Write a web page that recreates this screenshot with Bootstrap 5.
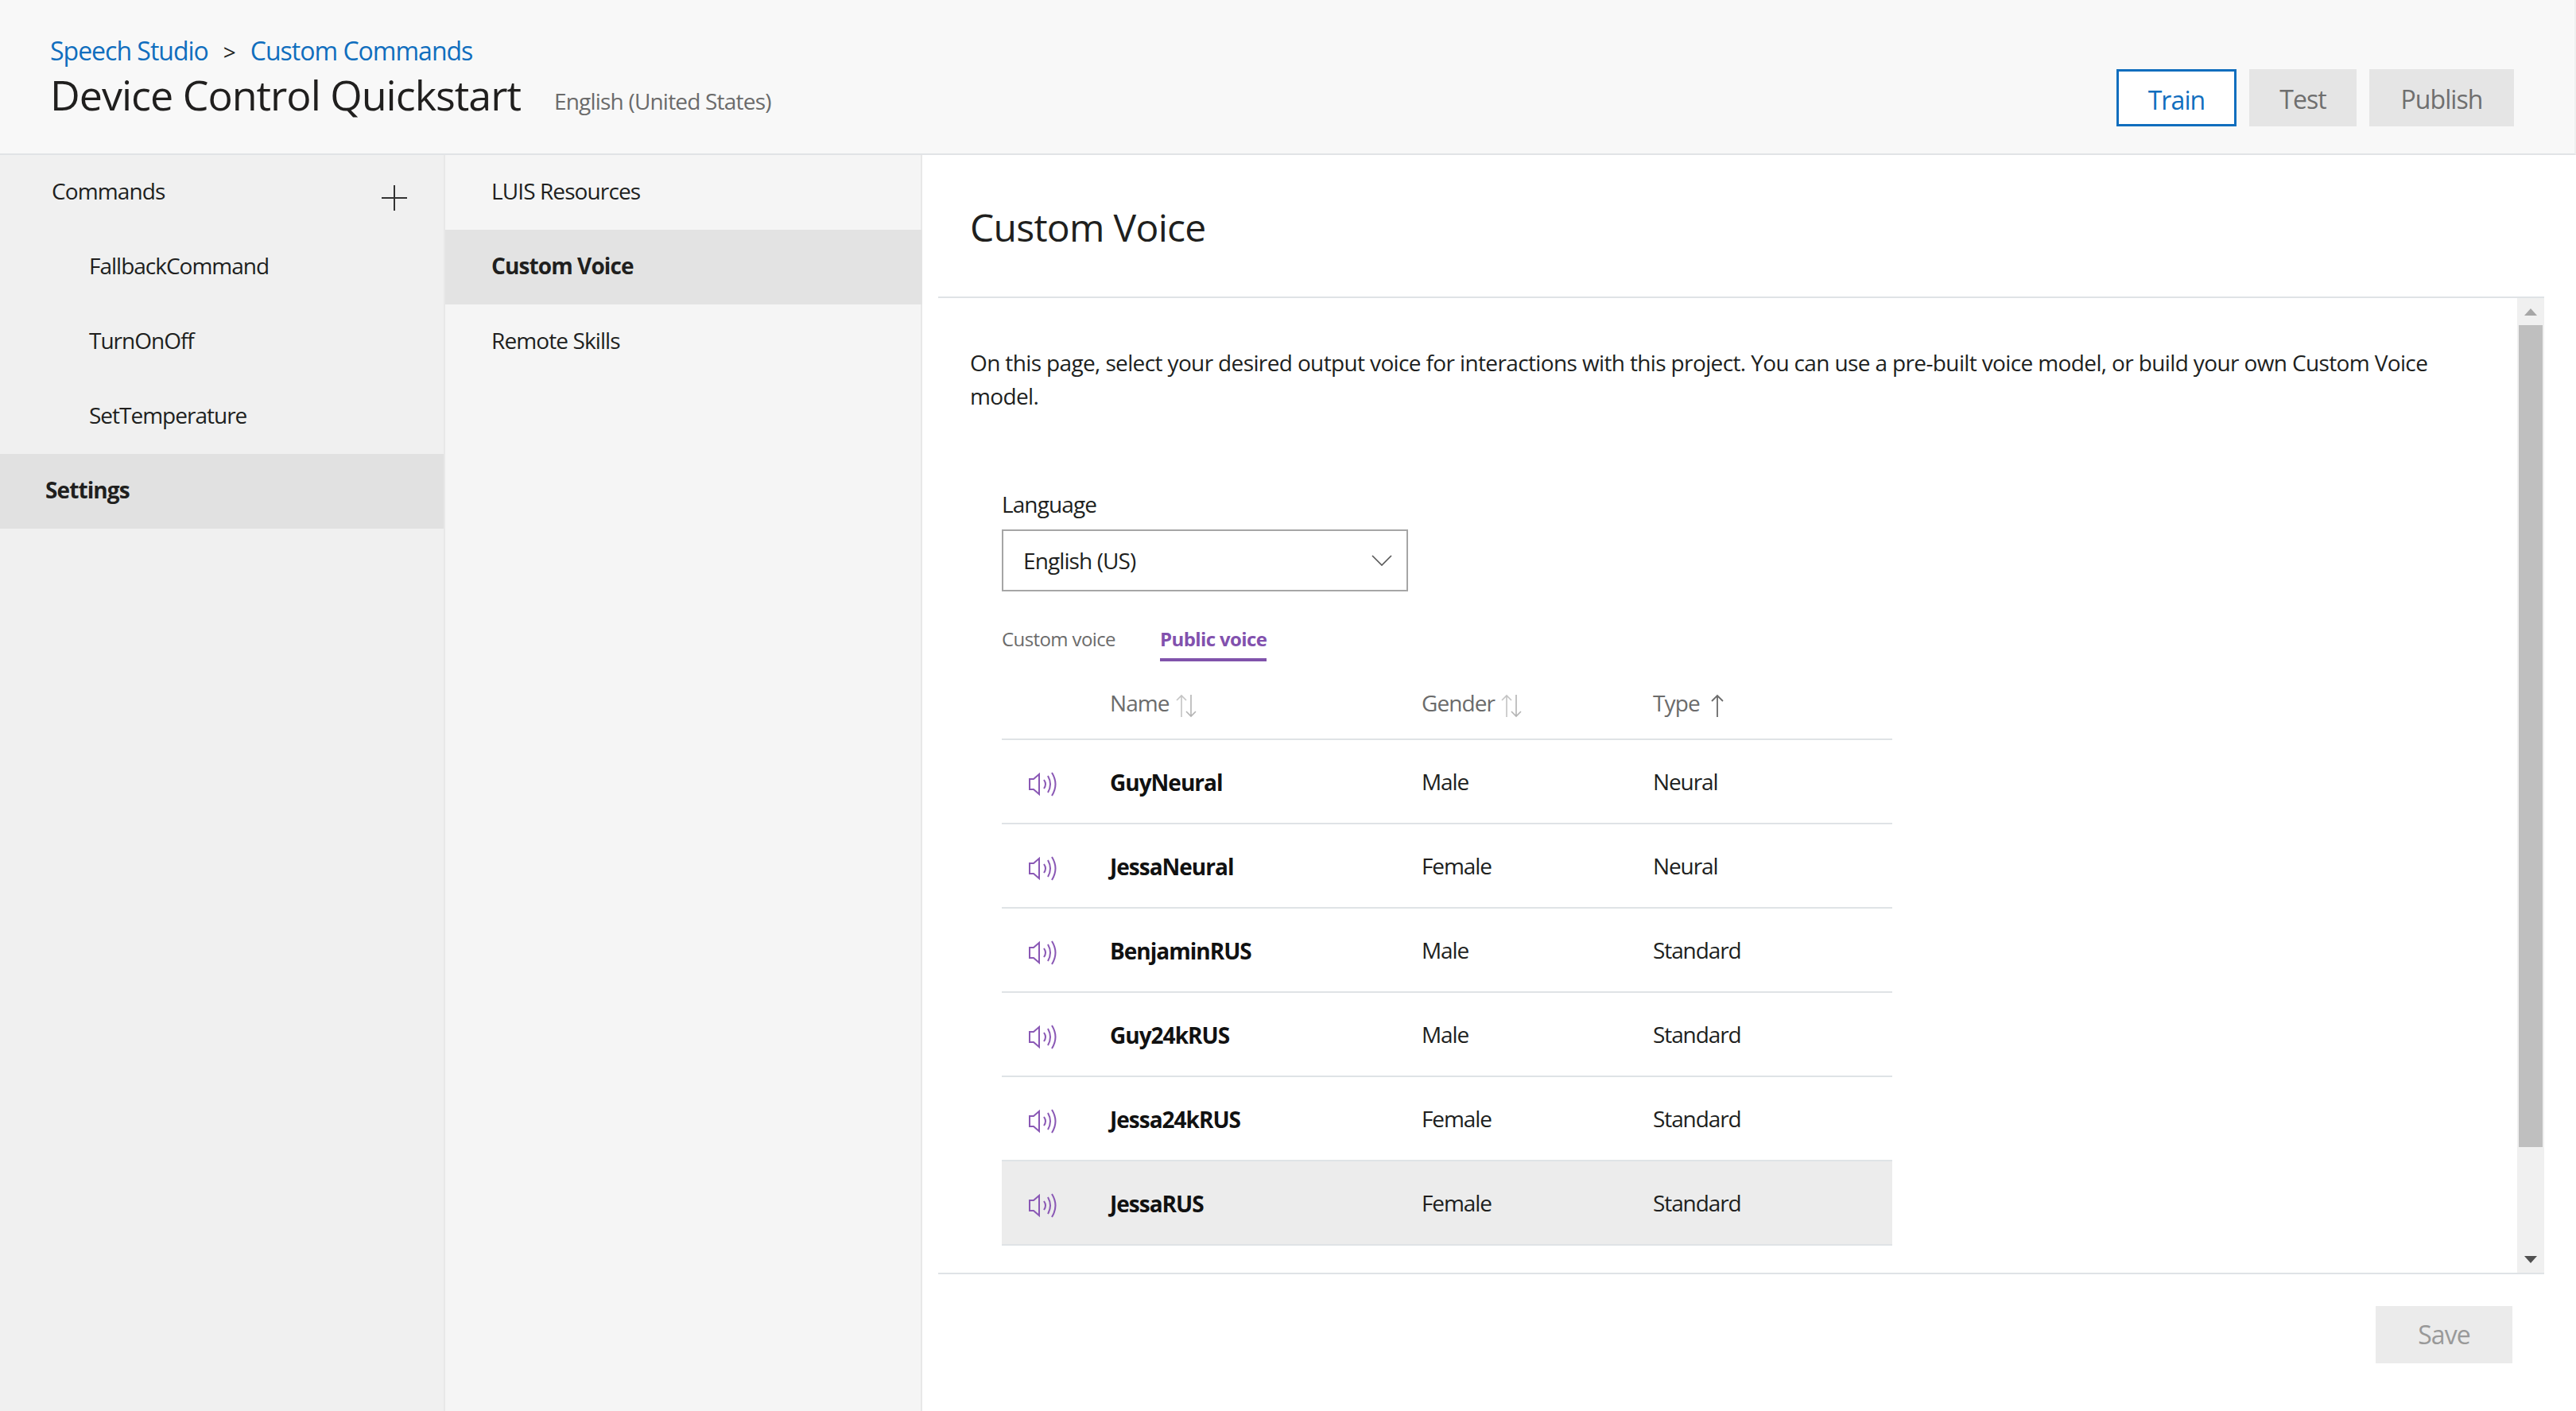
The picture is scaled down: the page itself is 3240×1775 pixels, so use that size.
<!DOCTYPE html>
<html lang="en">
<head>
    <meta charset="UTF-8">
    <meta name="viewport" content="width=device-width, initial-scale=1">
    <title>Custom Voice - Device Control Quickstart</title>
    <link rel="stylesheet" href="https://cdn.jsdelivr.net/npm/bootstrap@5.3.0/dist/css/bootstrap.min.css">
    <style>
        body { font-family: "Open Sans", "Liberation Sans", sans-serif; font-size: 28px; letter-spacing: -0.9px; color: #201f1e; background: #fff; }
        .studio { height: 1775px; overflow: hidden; }
        .top-bar { height: 195px; background: #f8f8f8; border-bottom: 2px solid #e1e3e6; border-right: 2px solid #efefef; padding: 0 76px 0 63px; }
        .crumbs { font-size: 32px; line-height: 44px; padding-top: 42px; letter-spacing: -1px; }
        .crumbs a { color: #106ebe; text-decoration: none; }
        .crumbs span { margin: 0 19px; font-size: 28px; }
        .proj-title { font-size: 52px; line-height: 70px; font-weight: 400; margin: -3px 0 0; letter-spacing: -1px; }
        .proj-lang { color: #6b6b6b; margin-left: 42px; position: relative; top: 6px; letter-spacing: -0.8px; }
        .top-btns { padding-top: 87px; gap: 16px; }
        .act-btn { height: 72px; border-radius: 0; font-size: 32px; line-height: 1; letter-spacing: -0.9px; background: #e5e5e5; color: #6f6f6f; border: 0; padding: 4px 0 0; }
        .act-btn:disabled { background: #e5e5e5; color: #6f6f6f; opacity: 1; }
        .btn-train { width: 151px; background: #fff; color: #106ebe; border: 3px solid #106ebe; padding-top: 6px; }
        .btn-test { width: 135px; }
        .btn-publish { width: 182px; }
        .nav-one { width: 560px; background: #f0f0f0; border-right: 2px solid #e8e8e8; }
        .nav-two { width: 600px; background: #f5f5f5; border-right: 2px solid #e8e8e8; }
        .nav-one, .nav-two { height: 1580px; flex: none; }
        .side-row { height: 94px; line-height: 90px; color: #201f1e; text-decoration: none; display: block; }
        .row-cmd { padding-left: 65px; }
        .row-sub { padding-left: 112px; letter-spacing: -1px; }
        .row-set { padding-left: 57px; font-weight: 700; background: #e1e1e1; }
        .row-two { padding-left: 58px; }
        .row-two.sel { font-weight: 700; background: #e3e3e3; margin-right: -2px; }
        .plus-ic { position: absolute; left: 480px; top: 38px; }
        .panel { width: 2020px; margin-left: 20px; }
        .panel-head { height: 180px; border-bottom: 2px solid #dfe3e6; padding-left: 40px; }
        .panel-head h2 { font-size: 48px; font-weight: 400; margin: 0; padding-top: 58px; line-height: 66px; letter-spacing: -0.7px; }
        .panel-body { height: 1228px; border-bottom: 2px solid #dfe3e6; }
        .scroll-in { padding: 60px 40px 0 40px; overflow: hidden; }
        .intro { line-height: 42px; margin: 0 0 95px; width: 1880px; letter-spacing: -0.63px; }
        .form-wrap { padding-left: 40px; }
        .lang-label { line-height: 40px; margin-bottom: 12px; display: block; }
        .lang-select { width: 511px; height: 78px; border: 2px solid #a6a6a6; padding-left: 25px; padding-right: 18px; }
        .voice-tabs { margin-top: 34px; gap: 56px; height: 58px; font-size: 24px; letter-spacing: -0.6px; }
        .voice-tabs a { color: #6b6b6b; text-decoration: none; height: 54px; line-height: 52px; display: block; }
        .voice-tabs a.on { color: #8251ae; font-weight: 700; border-bottom: 4px solid #8053ab; }
        .voice-table { width: 1120px; table-layout: fixed; margin: 0; --bs-table-bg: transparent; --bs-table-color: #201f1e; border-collapse: collapse; }
        .voice-table th, .voice-table td { padding: 0; vertical-align: middle; border-bottom: 2px solid #dfe3e6; font-weight: 400; }
        .voice-table thead th { height: 94px; color: #6b6b6b; padding-top: 2px; }
        .voice-table tbody td { height: 106px; letter-spacing: -1.1px; }
        .voice-table .v-name { font-weight: 700; color: #111; letter-spacing: -1px; padding-top: 2px; }
        .voice-table tr.picked td { background: #ececec; }
        .col-ic { width: 136px; padding-left: 34px !important; }
        .col-nm { width: 392px; }
        .col-gn { width: 291px; }
        .sort-ic { margin-left: 8px; vertical-align: -8px; }
        .fake-bar { width: 34px; background: #f0f0f0; flex: none; }
        .bar-arrow { height: 34px; }
        .bar-thumb { height: 1034px; background: #bfbfbf; margin: 0 2px; }
        .panel-foot { padding-top: 40px; padding-right: 40px; }
        .btn-save { width: 172px; height: 72px; background: #ebebeb; color: #999; border: 0; border-radius: 0; font-size: 32px; letter-spacing: -0.9px; padding: 0; }
        .btn-save:disabled { background: #ebebeb; color: #999; opacity: 1; }
    </style>
</head>
<body>
    <div class="studio d-flex flex-column">
        <!-- Header -->
        <header class="top-bar d-flex justify-content-between flex-shrink-0">
            <div>
                <div class="crumbs"><a href="#">Speech Studio</a><span>&gt;</span><a href="#">Custom Commands</a></div>
                <div class="d-flex align-items-center">
                    <h1 class="proj-title">Device Control Quickstart</h1>
                    <div class="proj-lang">English (United States)</div>
                </div>
            </div>
            <div class="top-btns d-flex align-items-start">
                <button type="button" class="btn act-btn btn-train">Train</button>
                <button type="button" class="btn act-btn btn-test" disabled>Test</button>
                <button type="button" class="btn act-btn btn-publish" disabled>Publish</button>
            </div>
        </header>

        <div class="d-flex flex-grow-1">
            <!-- Commands -->
            <nav class="nav-one position-relative">
                <a class="side-row row-cmd" href="#">Commands</a>
                <svg class="plus-ic" width="32" height="32" viewBox="0 0 32 32"><path d="M16 0V32M0 16H32" stroke="#333" stroke-width="2" fill="none"/></svg>
                <a class="side-row row-sub" href="#">FallbackCommand</a>
                <a class="side-row row-sub" href="#">TurnOnOff</a>
                <a class="side-row row-sub" href="#">SetTemperature</a>
                <a class="side-row row-set" href="#">Settings</a>
            </nav>

            <!-- Settings -->
            <nav class="nav-two">
                <a class="side-row row-two" href="#">LUIS Resources</a>
                <a class="side-row row-two sel" href="#">Custom Voice</a>
                <a class="side-row row-two" href="#">Remote Skills</a>
            </nav>

            <main class="panel">
                <div class="panel-head"><h2>Custom Voice</h2></div>
                <div class="panel-body d-flex">
                    <div class="scroll-in flex-grow-1">
                        <p class="intro">On this page, select your desired output voice for interactions with this project. You can use a pre-built voice model, or build your own Custom Voice model.</p>
                        <div class="form-wrap">
                            <label class="lang-label">Language</label>
                            <div class="lang-select d-flex align-items-center justify-content-between">
                                <span>English (US)</span>
                                <svg width="26" height="14" viewBox="0 0 26 14"><path d="M1 1L13 13L25 1" stroke="#555" stroke-width="1.6" fill="none"/></svg>
                            </div>
                            <div class="voice-tabs d-flex">
                                <a href="#">Custom voice</a>
                                <a href="#" class="on">Public voice</a>
                            </div>
                            <table class="table voice-table">
                                <thead>
                                    <tr>
                                        <th class="col-ic"></th>
                                        <th class="col-nm">Name<svg class="sort-ic" width="26" height="30" viewBox="0 0 26 30"><path d="M7 29V2M1 8L7 2L13 8" stroke="#c4c4c4" stroke-width="1.6" fill="none"/><path d="M19 1V28M13 22L19 28L25 22" stroke="#b4b4b4" stroke-width="1.6" fill="none"/></svg></th>
                                        <th class="col-gn">Gender<svg class="sort-ic" width="26" height="30" viewBox="0 0 26 30"><path d="M7 29V2M1 8L7 2L13 8" stroke="#c4c4c4" stroke-width="1.6" fill="none"/><path d="M19 1V28M13 22L19 28L25 22" stroke="#b4b4b4" stroke-width="1.6" fill="none"/></svg></th>
                                        <th>Type<svg class="sort-ic" width="16" height="30" viewBox="0 0 16 30" style="margin-left:14px"><path d="M8 29V2M1 9L8 2L15 9" stroke="#6b6b6b" stroke-width="1.8" fill="none"/></svg></th>
                                    </tr>
                                </thead>
                                <tbody id="voices"></tbody>
                            </table>
                        </div>
                    </div>
                    <div class="fake-bar d-flex flex-column">
                        <div class="bar-arrow d-flex align-items-center justify-content-center"><svg width="16" height="9" viewBox="0 0 16 9"><path d="M8 0L16 9H0Z" fill="#a6a6a6"/></svg></div>
                        <div class="bar-thumb"></div>
                        <div class="flex-grow-1"></div>
                        <div class="bar-arrow d-flex align-items-center justify-content-center"><svg width="16" height="9" viewBox="0 0 16 9"><path d="M8 9L16 0H0Z" fill="#505050"/></svg></div>
                    </div>
                </div>
                <div class="panel-foot d-flex justify-content-end">
                    <button type="button" class="btn btn-save" disabled>Save</button>
                </div>
            </main>
        </div>
    </div>

    <script>
        const voices = [
            ["GuyNeural", "Male", "Neural"],
            ["JessaNeural", "Female", "Neural"],
            ["BenjaminRUS", "Male", "Standard"],
            ["Guy24kRUS", "Male", "Standard"],
            ["Jessa24kRUS", "Female", "Standard"],
            ["JessaRUS", "Female", "Standard"]
        ];
        const speaker = '<svg width="37" height="31" viewBox="0 0 37 31"><path d="M1 9H6L13 3V28L6 22H1Z" stroke="#8a58b5" stroke-width="2" fill="none"/><path d="M19 10Q23 15.500 19 21M24 5Q30 15.500 24 26M29 1Q38 15.500 29 30" stroke="#8a58b5" stroke-width="2" fill="none"/></svg>';
        document.getElementById("voices").innerHTML = voices.map((v, i) =>
            `<tr class="${i === 5 ? "picked" : ""}"><td class="col-ic">${speaker}</td><td class="v-name">${v[0]}</td><td>${v[1]}</td><td>${v[2]}</td></tr>`
        ).join("");
    </script>
    <script src="https://cdn.jsdelivr.net/npm/bootstrap@5.3.0/dist/js/bootstrap.bundle.min.js"></script>
</body>
</html>
